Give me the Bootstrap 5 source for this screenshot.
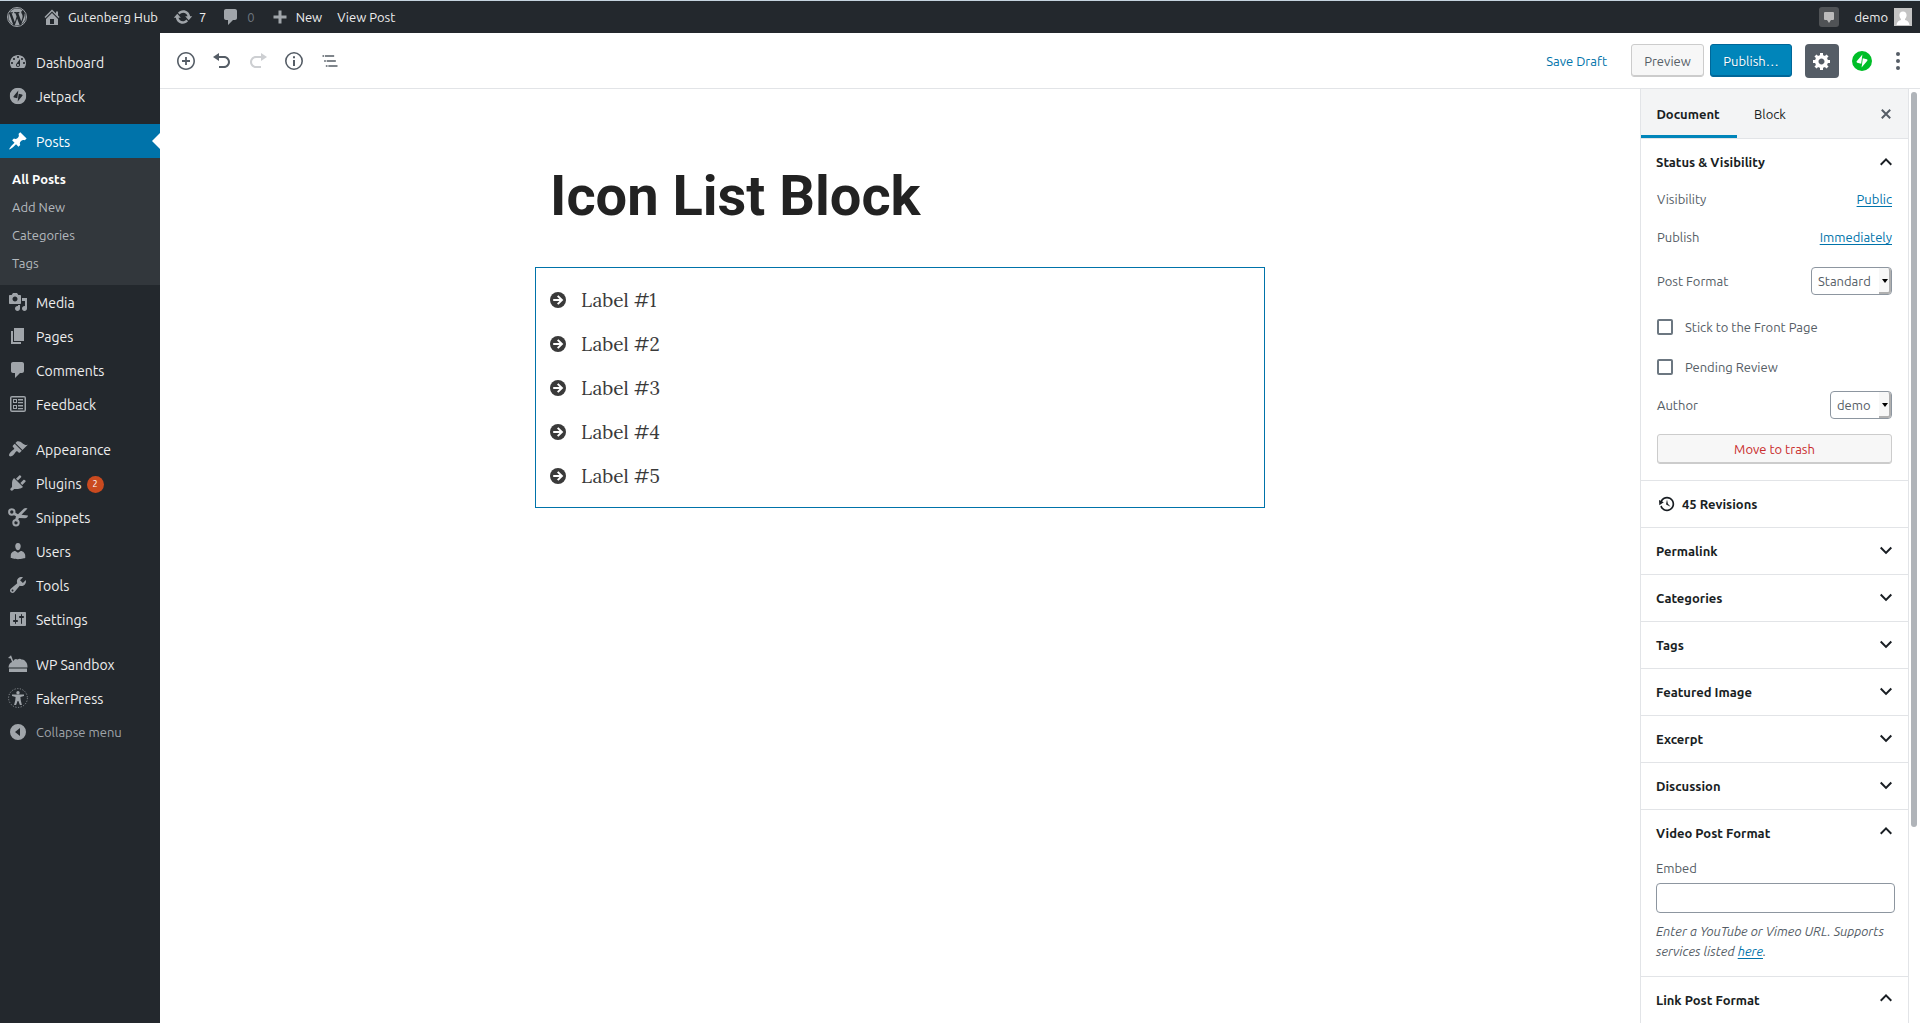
<!DOCTYPE html>
<html lang="en">
<head>
<meta charset="utf-8">
<meta name="viewport" content="width=device-width, initial-scale=1">
<title>Edit Post ‹ Gutenberg Hub — WordPress</title>
<link href="https://cdn.jsdelivr.net/npm/bootstrap@5.3.0/dist/css/bootstrap.min.css" rel="stylesheet">
<style>
:root{--wp-dark:#23282d;--wp-line:#e2e4e7;--wp-blue:#0085ba;--wp-link:#0073aa;--wp-ink:#191e23;--wp-grey:#555d66;--wp-icon:#a0a5aa}
body{font-family:Ubuntu,"Noto Sans",sans-serif;font-size:13px;line-height:20px;color:var(--wp-grey);background:#fff;height:100vh;overflow:hidden}
svg{fill:currentColor;display:block;flex:none}
.ico{width:20px;height:20px}
a{text-decoration:none}
.adminbar{height:33px;background:var(--wp-dark);border-top:1px solid #c5d4df;padding:0 8px 0 7px;line-height:32px}
.adminbar a{color:#eee;display:flex;align-items:center;gap:6px}
.adminbar svg{color:var(--wp-icon)}
.bar-group{display:flex;gap:15px}
.adminmenu{width:160px;background:var(--wp-dark);padding-top:12px;font-size:14px;flex:none}
.adminmenu li > a{display:flex;align-items:center;gap:8px;height:34px;padding:2px 0 0 8px;color:#eee}
.adminmenu li > a > svg{color:var(--wp-icon);margin-top:-2px}
.adminmenu .gap-top{margin-top:11px}
.adminmenu .current > a{background:var(--wp-link);color:#fff;position:relative}
.adminmenu .current > a > svg{color:#fff}
.adminmenu .current > a::after{content:"";position:absolute;right:0;top:9px;border:8px solid transparent;border-left-width:0;border-right-color:#fff}
.submenu{background:#32373c;padding:7px 0 8px;font-size:13px}
.adminmenu .submenu a{height:28px;padding:0 0 0 12px;color:#b4b9be}
.adminmenu .submenu a.on{color:#fff;font-weight:600}
.count{background:#ca4a1f;color:#fff;font-size:9px;line-height:17px;width:17px;height:17px;border-radius:50%;text-align:center;margin-left:-3px}
.collapse-btn{display:flex;align-items:center;gap:8px;height:33px;padding:0 0 0 8px;border:0;background:none;color:#a0a5aa;font-size:13px}
.topbar{height:56px;border-bottom:1px solid var(--wp-line);padding:0 4px 0 8px}
.tool{width:36px;height:36px;border:0;background:none;padding:8px;color:var(--wp-grey)}
.tool:disabled{color:#cdcfd2}
.gear{width:34px;height:34px;background:var(--wp-grey);color:#fff;border-radius:4px;padding:7px;margin-right:5px}
.wpbtn{border:1px solid #ccc;border-radius:3px;background:#f7f7f7;box-shadow:inset 0 -1px 0 #ccc;color:var(--wp-grey);font-size:13px;line-height:20px}
.topbar .wpbtn{height:33px}
.preview-btn{width:73px}
.wpbtn.publish-btn{width:82px;margin:0 13px 0 6px;background:var(--wp-blue);border-color:#006799;box-shadow:inset 0 -1px 0 #006799;color:#fff;text-shadow:0 1px 1px #006799}
.savedraft{border:0;background:none;color:var(--wp-link);padding:0;margin-right:24px}
.canvas{padding-top:72px}
.post-col{width:100%;max-width:730px}
.post-title{font-family:Roboto,sans-serif;font-weight:700;font-size:56px;line-height:70px;color:#222;margin:0 0 36px;padding-left:15px}
.icon-block{border:1px solid var(--wp-link);padding:10px 14px 9px;font-family:Lora,"Liberation Serif",serif;font-size:19px;line-height:44px;color:#3a3a3a}
.icon-block li{display:flex;align-items:center;gap:15px}
.settings{width:269px;border:solid var(--wp-line);border-width:0 1px;flex:none;overflow:hidden}
.tabs{height:50px;background:#f3f4f5;border-bottom:1px solid var(--wp-line);padding-right:12px}
.tab{border:0;background:none;color:var(--wp-ink);height:49px;padding:0;font-size:13px;width:66px}
.tab.active{width:96px;font-weight:600;border-bottom:3px solid var(--wp-blue);padding:3px 2px 0 0}
.panel{border-bottom:1px solid var(--wp-line);padding:0 15px}
.panel-head{display:flex;width:100%;align-items:center;justify-content:space-between;height:46px;border:0;padding:0;background:none;color:var(--wp-ink);font-weight:600;font-size:13px}
.panel-head svg{width:24px;height:24px;margin-right:-5px}
.meta-head svg{margin-bottom:4px}
.panel-head .history{width:18px;height:18px;margin:0 6px 0 2px}
.panel-row{display:flex;align-items:center;padding:0 1px}
.panel-row.spread{justify-content:space-between}
.row-sm{margin-top:14px}
.row-md{margin-top:18px}
.row-lg{margin-top:20px}
.row-xl{margin-top:22px}
.panel-row a,.hint a{color:var(--wp-link);text-decoration:underline;text-underline-offset:2px}
.picker{display:flex;align-items:stretch;border:1px solid #8d96a0;border-radius:4px;height:28px;position:relative;background:#fff}
.picker select{appearance:none;border:0;background:none;color:var(--wp-grey);font-size:13px;padding:0 20px 0 6px;width:100%}
.picker::before{content:"";position:absolute;right:0;top:0;width:12px;height:26px;border:solid #b0b0b0;border-width:0 2px 2px 0;border-radius:0 3px 3px 0;background:#f7f7f7;pointer-events:none}
.picker::after{content:"";position:absolute;right:3px;top:11px;border:3px solid transparent;border-top:4px solid #000;border-bottom:0;pointer-events:none}
.tick{appearance:none;width:16px;height:16px;border:2px solid #6c7781;border-radius:2px;margin:0 12px 0 0;background:#fff}
.trash-row{padding:15px 1px 16px}
.trash{width:100%;height:30px;color:#c92c2c}
.embed-label{display:block;margin:2px 0 5px}
.embed{width:239px;height:30px;border:1px solid #8d96a0;border-radius:4px;display:block}
.hint{margin:8px 0 15px}
.scroller{width:11px;flex:none;padding:3px 3px 0 2px}
.thumb{width:6px;height:79%;background:#b0b4b9;border-radius:3px}
</style>
<script src="https://cdn.jsdelivr.net/npm/bootstrap@5.3.0/dist/js/bootstrap.bundle.min.js"></script>
</head>
<body class="d-flex flex-column">
<svg width="0" height="0" class="position-absolute" aria-hidden="true">
<symbol id="comment" viewBox="0 0 20 20"><path d="M5 2h9c1.1 0 2 .9 2 2v7c0 1.1-.9 2-2 2h-2l-5 5v-5H5c-1.1 0-2-.9-2-2V4c0-1.1.9-2 2-2z"/></symbol>
<symbol id="jetpack" viewBox="0 0 20 20"><path fill-rule="evenodd" d="M10 0a10 10 0 1 0 0 20a10 10 0 0 0 0-20zM10.400 3.400L9.200 12.700L5.200 11.700Q4.100 11.300 4.700 10.300zM9.600 16.600L10.800 7.300L14.800 8.300Q15.900 8.700 15.300 9.700z"/></symbol>
<symbol id="down" viewBox="0 0 24 24"><path d="M7.410 7.840L12 12.420l4.590-4.580L18 9.250l-6 6-6-6z"/></symbol>
<symbol id="up" viewBox="0 0 24 24"><path d="M12 8l-6 6 1.410 1.410L12 10.830l4.590 4.580L18 14z"/></symbol>
<symbol id="arrow" viewBox="0 0 16 16"><circle cx="8" cy="8" r="8"/><path d="M3.200 8H11.500M7.700 3.900L11.900 8L7.700 12.100" fill="none" stroke="#fff" stroke-width="2"/></symbol>
</svg>

<nav class="adminbar d-flex justify-content-between flex-shrink-0" aria-label="Toolbar">
  <div class="bar-group">
    <a href="#" aria-label="About WordPress"><svg class="ico" viewBox="0 0 20 20"><circle cx="10" cy="10" r="9.500" fill="none" stroke="currentColor"/><path transform="translate(.4 .4) scale(.96)" d="M7.780 15.370L4.370 6.220c.55-.02 1.170-.08 1.170-.08.5-.06.44-1.130-.06-1.110 0 0-1.450.11-2.370.11-.18 0-.37 0-.58-.01C4.120 2.690 6.870 1.110 10 1.110c2.330 0 4.450.87 6.050 2.340-.68-.11-1.650.39-1.650 1.580 0 .74.45 1.360.9 2.100.35.61.55 1.360.55 2.460 0 1.490-1.400 5-1.400 5l-3.030-8.370c.54-.02.82-.17.82-.17.5-.05.44-1.250-.06-1.220 0 0-1.440.12-2.380.12-.87 0-2.330-.12-2.330-.12-.5-.03-.56 1.200-.06 1.220l.92.08 1.260 3.410zM17.410 10c.24-.64.74-1.870.43-4.250.7 1.290 1.050 2.710 1.050 4.250 0 3.290-1.730 6.240-4.400 7.780.97-2.590 1.940-5.200 2.920-7.780zM6.100 18.090C3.120 16.650 1.110 13.530 1.110 10c0-1.300.23-2.480.72-3.590C3.250 10.300 4.670 14.200 6.100 18.090zm4.030-6.630l2.580 6.980c-.86.29-1.760.45-2.710.45-.79 0-1.570-.11-2.290-.33.81-2.380 1.620-4.740 2.420-7.100z"/></svg></a>
    <a href="#"><svg class="ico" viewBox="0 0 20 20"><path fill-rule="evenodd" d="M16 8.500l1.530 1.530-1.060 1.060L10 4.600l-6.470 6.490-1.060-1.060L10 2.500l4 4v-2h2v4zm-6-2.460l6 5.990V18H4v-5.970zM12 17v-5H8v5h4z"/></svg>Gutenberg Hub</a>
    <a href="#"><svg class="ico" viewBox="0 0 20 20"><path d="M10.200 3.280c3.530 0 6.430 2.610 6.920 6h2.080l-3.500 4-3.500-4h2.320c-.45-1.970-2.210-3.450-4.320-3.450-1.450 0-2.730.71-3.540 1.780L4.950 5.660C6.230 4.200 8.110 3.280 10.200 3.280zm-.4 13.440c-3.520 0-6.430-2.610-6.920-6H.8l3.500-4c1.170 1.330 2.330 2.670 3.500 4H5.480c.45 1.970 2.210 3.450 4.320 3.450 1.450 0 2.730-.71 3.540-1.780l1.710 1.950c-1.280 1.460-3.150 2.380-5.250 2.380z"/></svg>7</a>
    <a href="#"><svg class="ico" aria-hidden="true"><use href="#comment"/></svg><span class="text-secondary">0</span></a>
    <a href="#"><svg class="ico" viewBox="0 0 20 20"><path d="M16.500 8.500v3h-5v5h-3v-5h-5v-3h5v-5h3v5z"/></svg>New</a>
    <a href="#">View Post</a>
  </div>
  <div class="bar-group">
    <a href="#" aria-label="Notifications"><svg width="20" height="20" viewBox="0 0 20 20"><rect width="20" height="20" rx="3" fill="#505356"/><path fill="#bbb" d="M6 5h8q1 0 1 1v6q0 1-1 1h-2l-2 3-2-3H6q-1 0-1-1V6q0-1 1-1z"/></svg></a>
    <a href="#">demo<svg width="18" height="18" viewBox="0 0 18 18"><rect width="18" height="18" fill="#c4c4c4"/><path fill="#fff" d="M9 3.500c2.300 0 3.600 1.600 3.600 3.700 0 1.500-.7 2.900-1.600 3.700v1.200c2.200.6 4.200 1.700 4.500 5H2.500c.3-3.300 2.300-4.400 4.500-5v-1.200c-.9-.8-1.600-2.200-1.600-3.700 0-2.100 1.300-3.700 3.600-3.700z"/></svg></a>
  </div>
</nav>

<div class="d-flex flex-grow-1 overflow-hidden">
  <nav class="adminmenu" aria-label="Main menu">
    <ul class="list-unstyled m-0">
      <li><a href="#"><svg class="ico" viewBox="0 0 20 20"><path fill-rule="evenodd" d="M3.760 16h12.480c1.100-1.370 1.760-3.110 1.760-5 0-4.420-3.580-8-8-8s-8 3.580-8 8c0 1.890.66 3.630 1.760 5zM10 4c.55 0 1 .45 1 1s-.45 1-1 1-1-.45-1-1 .45-1 1-1zM6 6c.55 0 1 .45 1 1s-.45 1-1 1-1-.45-1-1 .45-1 1-1zm8 0c.55 0 1 .45 1 1s-.45 1-1 1-1-.45-1-1 .45-1 1-1zm-5.370 5.550L12 7v6c0 1.100-.9 2-2 2s-2-.9-2-2c0-.57.24-1.080.63-1.450zM4 10c.55 0 1 .45 1 1s-.45 1-1 1-1-.45-1-1 .45-1 1-1zm12 0c.55 0 1 .45 1 1s-.45 1-1 1-1-.45-1-1 .45-1 1-1zm-5 3c0-.55-.45-1-1-1s-1 .45-1 1 .45 1 1 1 1-.45 1-1z"/></svg>Dashboard</a></li>
      <li><a href="#"><svg class="ico" viewBox="-2 -2 24 24"><use href="#jetpack" width="20" height="20"/></svg>Jetpack</a></li>
      <li class="current gap-top"><a href="#"><svg class="ico" viewBox="0 0 20 20"><path d="M10.440 3.020l1.820-1.820 6.360 6.350-1.830 1.820c-1.050-.68-2.480-.57-3.410.36l-.75.75c-.92.93-1.040 2.350-.35 3.410l-1.830 1.820-2.410-2.410-2.800 2.790c-.42.42-3.380 2.710-3.800 2.290s1.860-3.390 2.280-3.810l2.790-2.790L4.100 9.360l1.830-1.820c1.050.69 2.480.57 3.400-.36l.75-.75c.93-.92 1.050-2.350.36-3.410z"/></svg>Posts</a>
        <ul class="submenu list-unstyled m-0">
          <li><a href="#" class="on">All Posts</a></li><li><a href="#">Add New</a></li><li><a href="#">Categories</a></li><li><a href="#">Tags</a></li>
        </ul></li>
      <li><a href="#"><svg class="ico" viewBox="0 0 20 20"><path fill-rule="evenodd" d="M13 11V4c0-.55-.45-1-1-1h-1.670L9 1H5L3.670 3H2c-.55 0-1 .45-1 1v7c0 .55.45 1 1 1h10c.55 0 1-.45 1-1zM7 4.500c1.380 0 2.500 1.120 2.500 2.500S8.380 9.500 7 9.500 4.500 8.380 4.500 7 5.620 4.500 7 4.500zM14 6h5v10.500c0 1.380-1.120 2.500-2.500 2.500S14 17.880 14 16.500s1.120-2.500 2.500-2.500c.17 0 .34.02.5.05V9h-3V6zm-4 8.050V13h2v3.500c0 1.380-1.120 2.500-2.500 2.500S7 17.880 7 16.500 8.120 14 9.500 14c.17 0 .34.02.5.05z"/></svg>Media</a></li>
      <li><a href="#"><svg class="ico" viewBox="0 0 20 20"><path d="M6 15V2h10v13H6zm-1 1h8v2H3V5h2v11z"/></svg>Pages</a></li>
      <li><a href="#"><svg class="ico" aria-hidden="true"><use href="#comment"/></svg>Comments</a></li>
      <li><a href="#"><svg class="ico" viewBox="0 0 20 20"><path fill-rule="evenodd" d="M4 2h12q2 0 2 2v12q0 2-2 2H4q-2 0-2-2V4q0-2 2-2zM3.500 3.500v13h13v-13zM5 5h4v4H5zm1 1v2h2V6zM5 11h4v4H5zm1 1v2h2v-2zM10 5h5v1.500h-5zM10 8h5v1.200h-5zM10 11h5v1.500h-5zM10 14h5v1.200h-5z"/></svg>Feedback</a></li>
      <li class="gap-top"><a href="#"><svg class="ico" viewBox="0 0 20 20"><path d="M14.480 11.060L7.410 3.990l1.500-1.500c.5-.56 2.300-.47 3.510.32 1.210.8 1.430 1.280 2.910 2.100 1.180.64 2.450 1.260 4.450.85zm-.71.71L6.700 4.700 4.930 6.470c-.39.39-.39 1.020 0 1.410l1.060 1.060c.39.39.39 1.030 0 1.420-.6.6-1.430 1.110-2.210 1.690-.35.26-.7.53-1.010.84C1.430 14.230.4 16.080 1.400 17.070c.99 1 2.840-.03 4.180-1.360.31-.31.58-.66.85-1.020.57-.78 1.080-1.610 1.690-2.210.39-.39 1.020-.39 1.410 0l1.060 1.060c.39.39 1.020.39 1.410 0z"/></svg>Appearance</a></li>
      <li><a href="#"><svg class="ico" viewBox="0 0 20 20"><path d="M13.110 4.360L9.870 7.600 8 5.730l3.240-3.240c.35-.34 1.050-.2 1.560.32.52.51.66 1.210.31 1.550zm-8 1.770l.91-1.120 9.010 9.010-1.190.84c-.71.71-2.630 1.160-3.820 1.160H6.140L4.900 17.260c-.59.59-1.540.59-2.120 0-.59-.58-.59-1.530 0-2.120l1.240-1.240v-3.880c0-1.130.4-3.190 1.090-3.890zm7.260 3.970l3.240-3.240c.34-.35 1.040-.21 1.550.31.52.51.66 1.210.31 1.550l-3.240 3.250z"/></svg>Plugins <span class="count">2</span></a></li>
      <li><a href="#"><svg class="ico" viewBox="0 0 20 20"><g fill="none" stroke="currentColor" stroke-width="2"><circle cx="3.800" cy="5" r="2.700"/><circle cx="8" cy="15.800" r="2.700"/></g><path d="M6 5l4 2.200L16 1.500q2-1 3.500 0L13.500 7.800l6.500.7q-.5 2.800-3 2.800l-6-.2-1.800 3.600-2.400-1L8 9.300 5 7.800z"/></svg>Snippets</a></li>
      <li><a href="#"><svg class="ico" viewBox="0 0 20 20"><path d="M10 9.250c-2.270 0-2.730-3.440-2.730-3.440C7 4.020 7.820 2 9.970 2c2.160 0 2.980 2.020 2.710 3.810 0 0-.41 3.440-2.680 3.440zm0 2.570L12.720 10c2.390 0 4.520 2.330 4.520 4.530v2.490s-3.650 1.130-7.240 1.130c-3.650 0-7.240-1.130-7.240-1.130v-2.490c0-2.250 1.940-4.480 4.470-4.480z"/></svg>Users</a></li>
      <li><a href="#"><svg class="ico" viewBox="0 0 20 20"><path fill-rule="evenodd" d="M16.680 9.770c-1.340 1.340-3.300 1.670-4.950.99l-5.410 6.520c-.99.99-2.590.99-3.580 0s-.99-2.590 0-3.570l6.520-5.420c-.68-1.650-.35-3.610.99-4.950 1.280-1.280 3.120-1.620 4.720-1.060l-2.890 2.890 2.820 2.820 2.860-2.870c.53 1.580.18 3.390-1.080 4.650zM3.810 16.210c.4.39 1.040.39 1.430 0 .4-.4.4-1.040 0-1.430-.39-.4-1.030-.4-1.430 0-.39.39-.39 1.030 0 1.430z"/></svg>Tools</a></li>
      <li><a href="#"><svg class="ico" viewBox="0 0 20 20"><path fill-rule="evenodd" d="M18 16V4c0-.55-.45-1-1-1H3c-.55 0-1 .45-1 1v12c0 .55.45 1 1 1h14c.55 0 1-.45 1-1zM8 11h1c.55 0 1 .45 1 1s-.45 1-1 1H8v1.500c0 .28-.22.5-.5.5s-.5-.22-.5-.5V13H6c-.55 0-1-.45-1-1s.45-1 1-1h1V5.500c0-.28.22-.5.5-.5s.5.22.5.5V11zm5-2h-1c-.55 0-1-.45-1-1s.45-1 1-1h1V5.500c0-.28.22-.5.5-.5s.5.22.5.5V7h1c.55 0 1 .45 1 1s-.45 1-1 1h-1v5.500c0 .28-.22.5-.5.5s-.5-.22-.5-.5V9z"/></svg>Settings</a></li>
      <li class="gap-top"><a href="#"><svg class="ico" viewBox="0 0 20 20"><path d="M1 14.500h18V18H1zM.5 13.500q.3-4.500 3.500-5.500L2.700 4.500 0 4l3-2.800 1 2.600L5.200 7Q7 4 9.500 5.500q2.500-1.500 4 0 2.500-.5 4 2 2 1.500 2 6z"/></svg>WP Sandbox</a></li>
      <li><a href="#"><svg class="ico" viewBox="0 0 20 20"><circle cx="10" cy="10" r="9.400" fill="none" stroke="currentColor" stroke-width=".8" stroke-dasharray="1.200 1.500"/><circle cx="10" cy="4.700" r="1.700"/><path d="M4 6.500h12v1.600l-3.600.9.3 3 1.200 5h-2L10.400 13h-.8l-1.500 4h-2l1.200-5 .3-3L4 8.100z"/></svg>FakerPress</a></li>
    </ul>
    <button type="button" class="collapse-btn"><svg class="ico" viewBox="0 0 20 20"><path fill-rule="evenodd" d="M10 2a8 8 0 1 0 0 16a8 8 0 0 0 0-16zM12 6v8l-5-4z"/></svg>Collapse menu</button>
  </nav>

  <div class="d-flex flex-column flex-grow-1">
    <header class="topbar d-flex align-items-center justify-content-between flex-shrink-0">
      <div class="d-flex">
        <button class="tool" type="button" aria-label="Add block"><svg class="ico" viewBox="0 0 20 20"><path fill-rule="evenodd" d="M10 1c-5 0-9 4-9 9s4 9 9 9 9-4 9-9-4-9-9-9zm0 16.400c-4.100 0-7.400-3.300-7.400-7.400S5.900 2.600 10 2.600s7.400 3.300 7.400 7.400-3.300 7.400-7.400 7.400zM10.900 6H9.100v3.100H6v1.800h3.100V14h1.800v-3.100H14V9.100h-3.100V6z"/></svg></button>
        <button class="tool" type="button" aria-label="Undo"><svg class="ico" viewBox="0 0 20 20"><path d="M12 5H7V2L1 6l6 4V7h5c2.200 0 4 1.800 4 4s-1.800 4-4 4H7v2h5c3.300 0 6-2.700 6-6s-2.700-6-6-6z"/></svg></button>
        <button class="tool" type="button" aria-label="Redo" disabled><svg class="ico" viewBox="0 0 20 20"><path d="M8 5h5V2l6 4-6 4V7H8c-2.200 0-4 1.800-4 4s1.800 4 4 4h5v2H8c-3.300 0-6-2.700-6-6s2.700-6 6-6z"/></svg></button>
        <button class="tool" type="button" aria-label="Content structure"><svg class="ico" viewBox="0 0 20 20"><path fill-rule="evenodd" d="M10 1a9 9 0 1 0 0 18a9 9 0 0 0 0-18zm0 1.600a7.400 7.400 0 1 1 0 14.800a7.400 7.400 0 0 1 0-14.800zM9 5.200h2v2H9zM9 9h2v6H9z"/></svg></button>
        <button class="tool" type="button" aria-label="Block navigation"><svg class="ico" viewBox="0 0 24 24"><path d="M5 5H3v2h2V5zm3 8h11v-2H8v2zm9-8H6v2h11V5zM7 11H5v2h2v-2zm0 8h2v-2H7v2zm3-2v2h11v-2H10z"/></svg></button>
      </div>
      <div class="d-flex align-items-center">
        <button type="button" class="savedraft">Save Draft</button>
        <button type="button" class="wpbtn preview-btn p-0">Preview</button>
        <button type="button" class="wpbtn publish-btn p-0">Publish…</button>
        <button type="button" class="tool gear" aria-label="Settings"><svg class="ico" viewBox="0 0 20 20"><path fill-rule="evenodd" d="M18 12h-2.180c-.17.7-.44 1.350-.81 1.930l1.540 1.540-2.100 2.100-1.540-1.540c-.58.36-1.230.63-1.910.79V19H8v-2.180c-.68-.16-1.330-.43-1.910-.79l-1.540 1.540-2.120-2.120 1.540-1.540c-.36-.58-.63-1.230-.79-1.910H1V9.030h2.170c.16-.7.44-1.350.8-1.940L2.430 5.550l2.100-2.100 1.540 1.540c.58-.37 1.240-.64 1.930-.81V2h3v2.180c.68.16 1.330.43 1.910.79l1.540-1.540 2.120 2.120-1.540 1.540c.36.59.64 1.240.8 1.940H18V12zm-8.500 1.500c1.660 0 3-1.340 3-3s-1.340-3-3-3-3 1.340-3 3 1.340 3 3 3z"/></svg></button>
        <button type="button" class="tool" aria-label="Jetpack"><svg class="ico" color="#00be28"><use href="#jetpack"/></svg></button>
        <button type="button" class="tool" aria-label="More tools"><svg class="ico" viewBox="0 0 20 20"><circle cx="10" cy="3" r="2"/><circle cx="10" cy="10" r="2"/><circle cx="10" cy="17" r="2"/></svg></button>
      </div>
    </header>
    <div class="d-flex flex-grow-1 overflow-hidden">
      <main class="canvas flex-grow-1 d-flex justify-content-center">
        <div class="post-col">
          <h1 class="post-title">Icon List Block</h1>
          <ul class="icon-block list-unstyled m-0">
            <li><svg width="16" height="16"><use href="#arrow"/></svg>Label #1</li>
            <li><svg width="16" height="16"><use href="#arrow"/></svg>Label #2</li>
            <li><svg width="16" height="16"><use href="#arrow"/></svg>Label #3</li>
            <li><svg width="16" height="16"><use href="#arrow"/></svg>Label #4</li>
            <li><svg width="16" height="16"><use href="#arrow"/></svg>Label #5</li>
          </ul>
        </div>
      </main>
      <aside class="settings" aria-label="Document settings">
        <div class="tabs d-flex align-items-center">
          <button type="button" class="tab active">Document</button>
          <button type="button" class="tab me-auto">Block</button>
          <button type="button" class="btn p-0 border-0" aria-label="Close settings"><svg width="20" height="20" viewBox="0 0 20 20" color="#555d66"><path d="M5.800 5.800l8.400 8.400M14.200 5.800l-8.400 8.400" stroke="currentColor" stroke-width="2"/></svg></button>
        </div>
        <section class="panel">
          <button type="button" class="panel-head">Status &amp; Visibility<svg><use href="#up"/></svg></button>
          <div class="panel-row spread mt-1"><span>Visibility</span><a href="#">Public</a></div>
          <div class="panel-row spread row-md"><span>Publish</span><a href="#">Immediately</a></div>
          <div class="panel-row spread row-lg"><label for="fmt">Post Format</label><span class="picker"><select id="fmt"><option>Standard</option></select></span></div>
          <div class="panel-row row-xl"><input class="tick" type="checkbox" id="stick"><label for="stick">Stick to the Front Page</label></div>
          <div class="panel-row row-lg"><input class="tick" type="checkbox" id="pend"><label for="pend">Pending Review</label></div>
          <div class="panel-row spread row-sm"><label for="auth">Author</label><span class="picker"><select id="auth"><option>demo</option></select></span></div>
          <div class="trash-row"><button type="button" class="wpbtn trash p-0">Move to trash</button></div>
        </section>
        <section class="panel"><button type="button" class="panel-head justify-content-start"><svg viewBox="0 0 20 20" class="history"><path d="M13.650 2.880c3.930 2.010 5.480 6.840 3.470 10.770s-6.830 5.480-10.770 3.470c-1.870-.96-3.200-2.560-3.860-4.400l1.640-1.030c.45 1.570 1.520 2.950 3.080 3.760 3.010 1.540 6.690.35 8.230-2.660 1.550-3.010.36-6.690-2.650-8.240C9.780 3.010 6.100 4.200 4.560 7.210l1.880.97-4.950 3.080-.39-5.820 1.780.91C4.900 2.400 9.750.89 13.650 2.880zm-4.360 7.830C9.110 10.530 9 10.280 9 10c0-.07.03-.12.04-.19h-.01L10 5l.97 4.810L14 13l-4.500-2.120.02-.02c-.08-.04-.16-.09-.23-.15z"/></svg>45 Revisions</button></section>
        <section class="panel"><button type="button" class="panel-head">Permalink<svg><use href="#down"/></svg></button></section>
        <section class="panel"><button type="button" class="panel-head">Categories<svg><use href="#down"/></svg></button></section>
        <section class="panel"><button type="button" class="panel-head">Tags<svg><use href="#down"/></svg></button></section>
        <section class="panel"><button type="button" class="panel-head">Featured Image<svg><use href="#down"/></svg></button></section>
        <section class="panel"><button type="button" class="panel-head">Excerpt<svg><use href="#down"/></svg></button></section>
        <section class="panel"><button type="button" class="panel-head">Discussion<svg><use href="#down"/></svg></button></section>
        <section class="panel">
          <button type="button" class="panel-head meta-head">Video Post Format<svg><use href="#up"/></svg></button>
          <label for="embed" class="embed-label">Embed</label>
          <input type="text" id="embed" class="embed">
          <p class="hint fst-italic">Enter a YouTube or Vimeo URL. Supports services listed <a href="#">here</a>.</p>
        </section>
        <section class="panel"><button type="button" class="panel-head meta-head">Link Post Format<svg><use href="#up"/></svg></button></section>
      </aside>
      <div class="scroller"><div class="thumb"></div></div>
    </div>
  </div>
</div>
</body>
</html>
